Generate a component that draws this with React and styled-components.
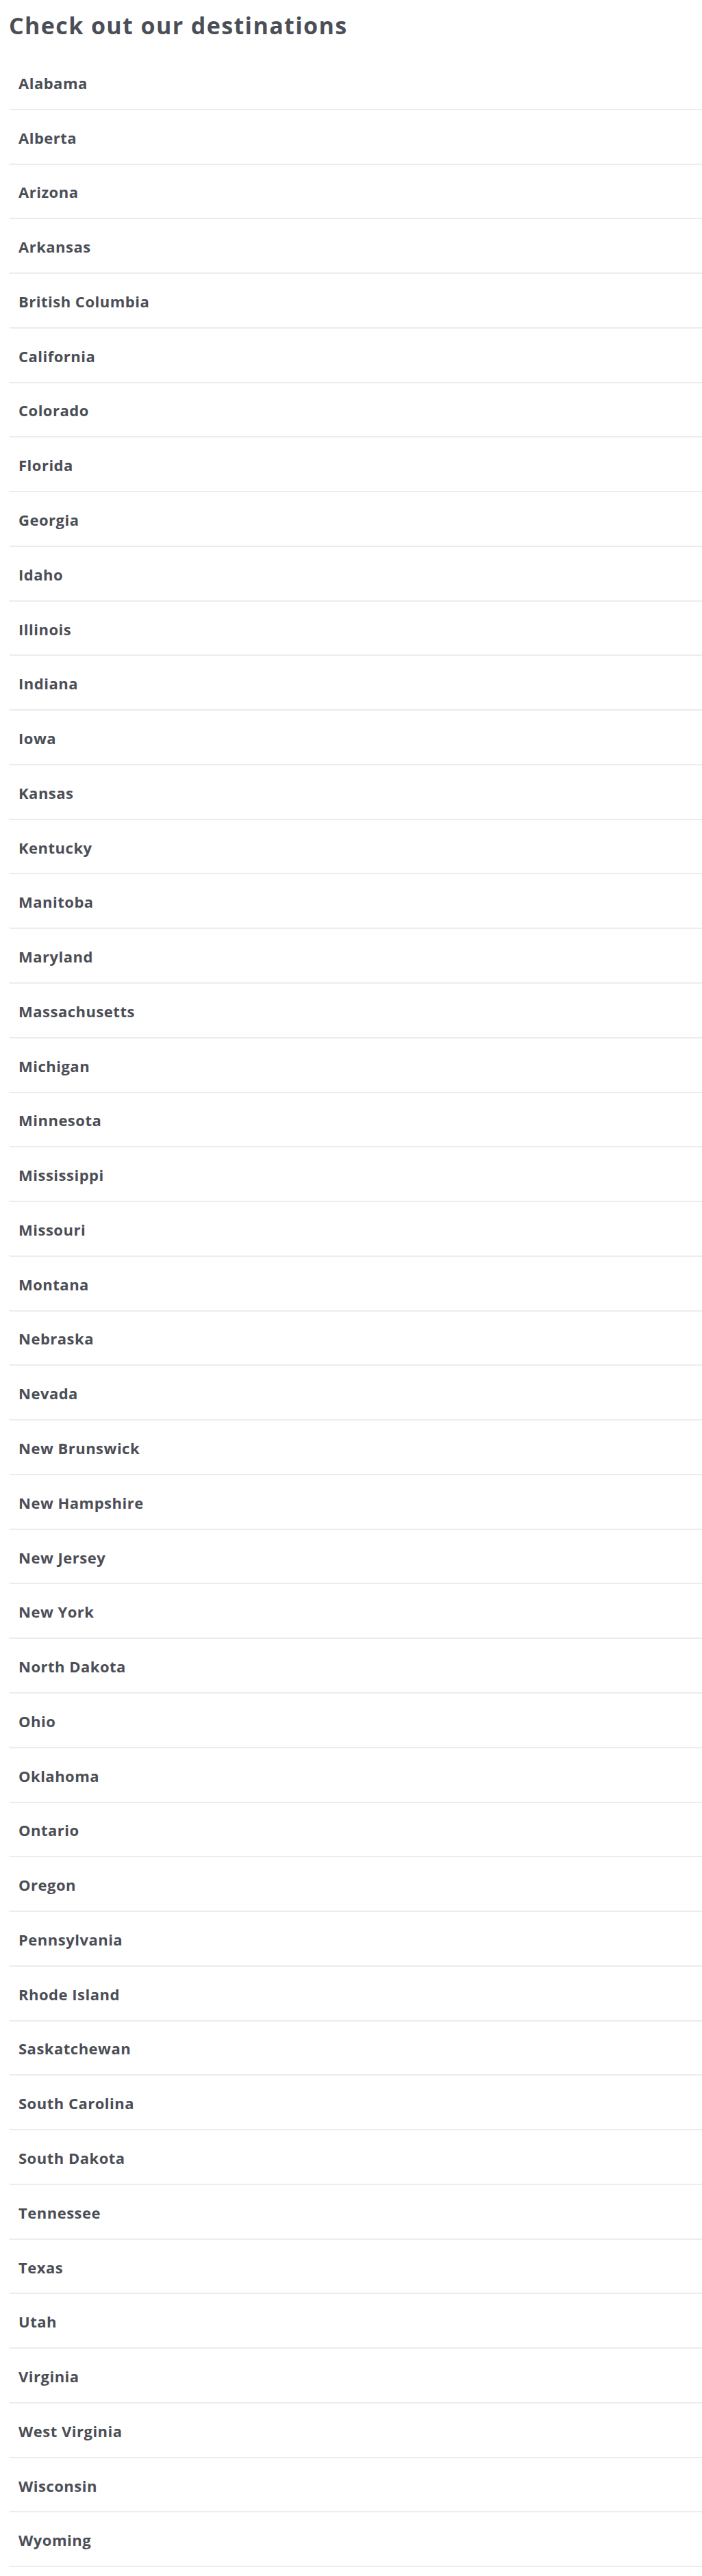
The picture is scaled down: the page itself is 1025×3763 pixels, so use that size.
import React from "react";
import styled, { createGlobalStyle } from "styled-components";

const GlobalStyle = createGlobalStyle`
    html, body {
        margin: 0;
        padding: 0;
        background: #fff;
    }
    body {
        font-family: "Open Sans", "Liberation Sans", sans-serif;
        color: #4b4e56;
    }
`

const Page = styled.div`
    padding: 0 0 12px 13px;
`

const Title = styled.h2`
    margin: 0;
    height: 81px;
    padding-top: 14px;
    box-sizing: border-box;
    font-size: 34px;
    font-weight: 700;
    line-height: 46px;
    letter-spacing: 1.4px;
    color: #4b4e56;
`

const List = styled.ul`
    list-style: none;
    margin: 0;
    padding: 0;
`

const Item = styled.li`
    display: flex;
    align-items: center;
    height: 79.78px;
    box-sizing: border-box;
    padding: 2px 0 0 14px;
    border-bottom: 2px solid #ececec;
    border-radius: 0 0 0 3px;
    font-size: 22px;
    font-weight: 700;
    letter-spacing: 0.5px;
    color: #4b4e56;
`

const places = [
    "Alabama", "Alberta", "Arizona", "Arkansas", "British Columbia", "California",
    "Colorado", "Florida", "Georgia", "Idaho", "Illinois", "Indiana", "Iowa",
    "Kansas", "Kentucky", "Manitoba", "Maryland", "Massachusetts", "Michigan",
    "Minnesota", "Mississippi", "Missouri", "Montana", "Nebraska", "Nevada",
    "New Brunswick", "New Hampshire", "New Jersey", "New York", "North Dakota",
    "Ohio", "Oklahoma", "Ontario", "Oregon", "Pennsylvania", "Rhode Island",
    "Saskatchewan", "South Carolina", "South Dakota", "Tennessee", "Texas",
    "Utah", "Virginia", "West Virginia", "Wisconsin", "Wyoming",
]

const App = () => {
    return (
        <>
            <GlobalStyle />
            <Page>
                <Title>Check out our destinations</Title>
                <List>
                    {places.map((place) => (
                        <Item key={place}>{place}</Item>
                    ))}
                </List>
            </Page>
        </>
    );
};

export default App;
